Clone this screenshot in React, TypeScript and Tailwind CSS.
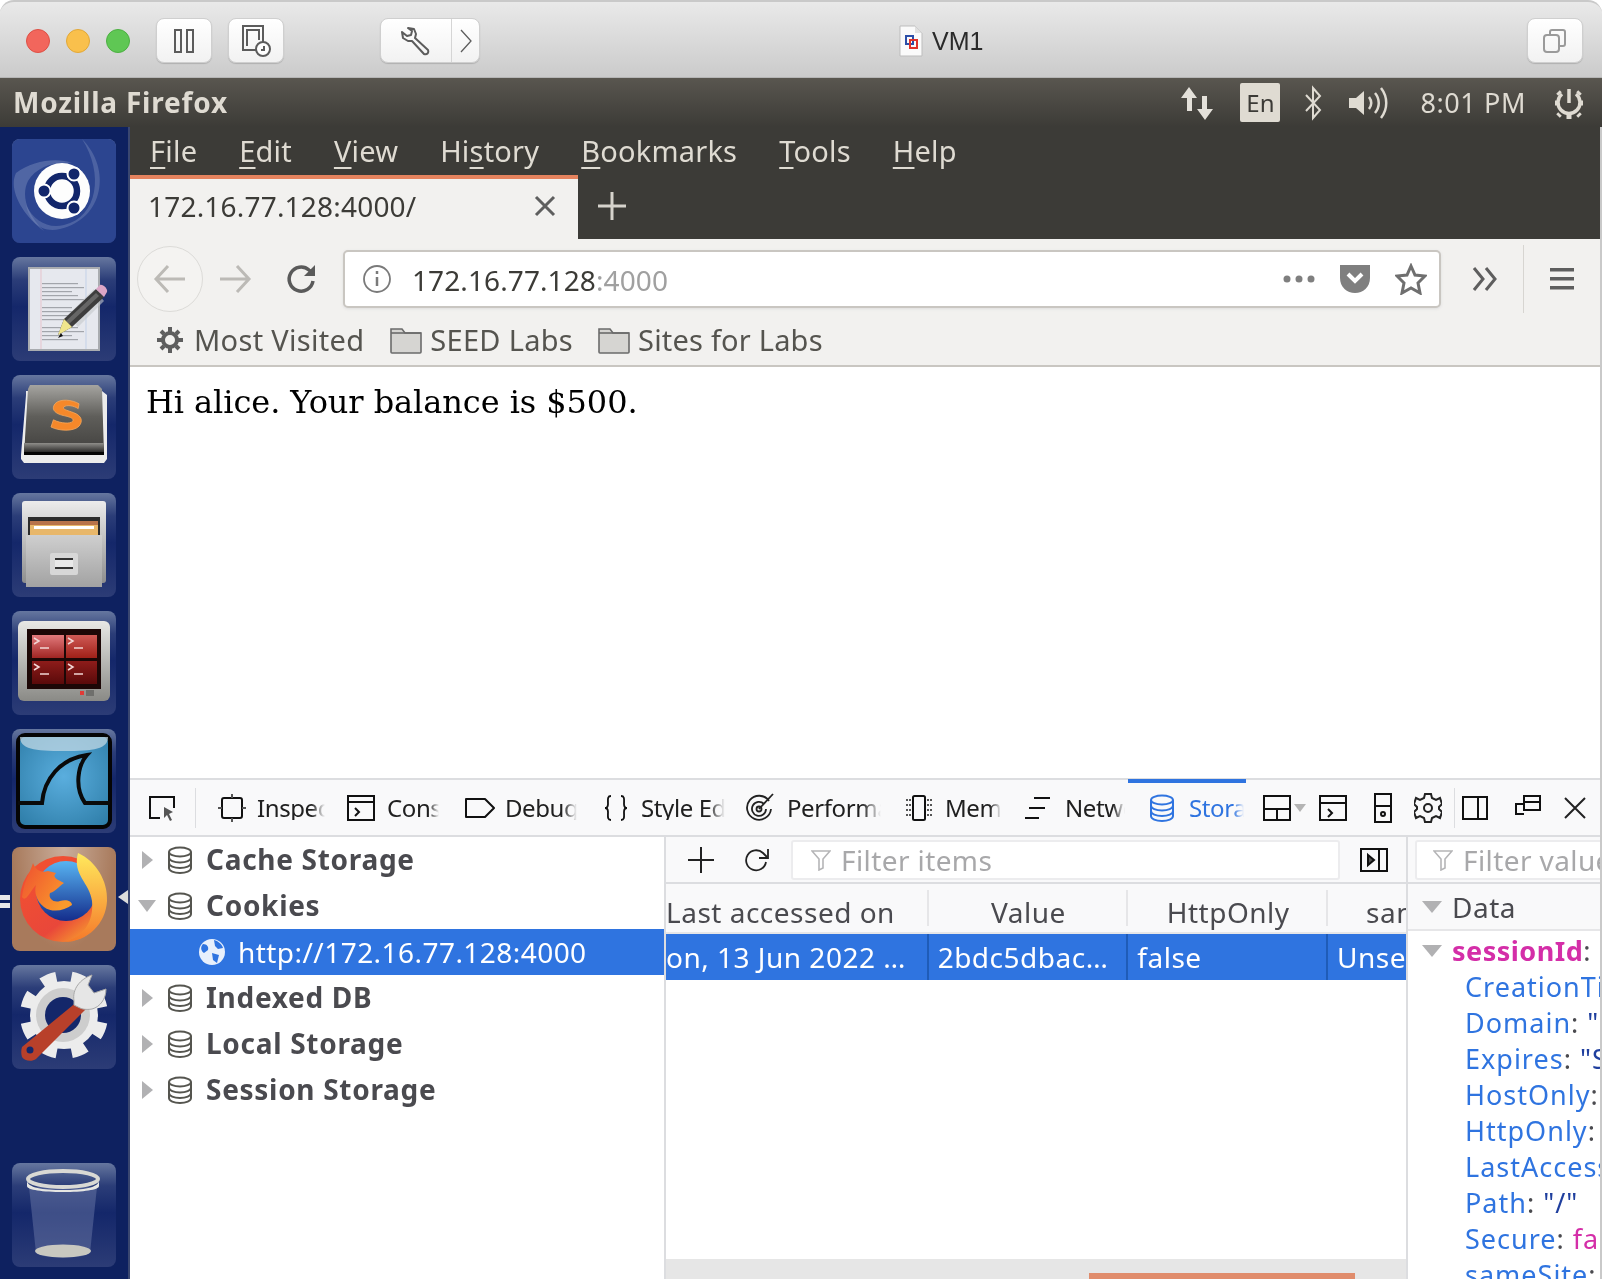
import type { ReactNode } from "react";

const ui = "font-['Noto_Sans',sans-serif]";

const Tile = ({ children, active }: { children: ReactNode; active?: boolean }) => (
  <div
    className={`w-[104px] h-[104px] rounded-[8px] overflow-hidden shrink-0 ${
      active
        ? "bg-[radial-gradient(ellipse_at_50%_0%,#c9ad9b,#a87a5c_70%)]"
        : "bg-[linear-gradient(180deg,#66779f_0%,#2b3d78_22%,#14276a_48%,#2c3c76_100%)]"
    }`}
  >
    <svg viewBox="0 0 104 104" className="w-[104px] h-[104px]">
      {children}
    </svg>
  </div>
);

const UbuntuIcon = () => (
  <>
    <rect width="104" height="104" fill="#2c4590" />
    <path d="M70 0c30 30 22 80-22 90C30 94 18 84 14 66c8 16 22 24 38 20 34-8 40-52 18-86z" fill="#6c7fb4" opacity=".5" />
    <path d="M4 34c16-12 40-16 56-10-18-2-36 4-44 18-6 12-4 30 16 50C10 76-4 50 4 34z" fill="#7c8dbd" opacity=".45" />
    <circle cx="50" cy="52" r="28" fill="#fdfdfd" />
    <circle cx="50" cy="52" r="15" fill="none" stroke="#12266b" strokeWidth="6.5" />
    <circle cx="32" cy="52" r="6.5" fill="#12266b" stroke="#fff" strokeWidth="2" />
    <circle cx="62" cy="35" r="6.5" fill="#12266b" stroke="#fff" strokeWidth="2" />
    <circle cx="62" cy="69" r="6.5" fill="#12266b" stroke="#fff" strokeWidth="2" />
  </>
);

const EditorIcon = () => (
  <>
    <rect x="16" y="10" width="72" height="84" fill="#a9acb0" />
    <rect x="18" y="12" width="68" height="80" fill="#e6e8ee" />
    <path d="M29 12v80" stroke="#e6c3cc" strokeWidth="1" />
    <path d="M74 12v80" stroke="#c3d1e8" strokeWidth="1" />
    {[26, 30, 34, 38, 42, 50, 54, 58, 62, 70, 74, 78, 82].map((y, i) => (
      <rect key={y} x="30" y={y} width={i % 3 === 0 ? 36 : i % 3 === 1 ? 42 : 30} height="1.2" fill="#a2a5ab" />
    ))}
    <path d="M56 58l26-26 10 12-26 26z" fill="#c4c8cc" opacity=".6" />
    <path d="M52 62l32-30 8 8-32 30-14 8z" fill="#3d3d3d" />
    <path d="M54 64l30-28 3 3-30 28z" fill="#666" />
    <path d="M52 62l8 8-14 8z" fill="#efe58c" />
    <path d="M49 76l-3 5 5-2z" fill="#111" />
    <path d="M84 32l4-4c3-1 8 4 7 7l-3 5z" fill="#dca6c7" />
  </>
);

const SublimeIcon = () => (
  <>
    <path d="M14 16h76l5 4v64l-3 4H12l-3-4v-4l5-60z" fill="#ececec" />
    <path d="M18 10h68l4 4 2 66H12l4-66z" fill="url(#subTop)" />
    <rect x="12" y="68" width="80" height="9" fill="url(#subBar)" />
    <rect x="12" y="77" width="80" height="3" fill="#040404" />
    <g transform="translate(51 40) scale(.8) translate(-51 -41)">
      <path d="M71 27c-8-5-24-7-30 0-6 8 2 13 12 15 9 2 12 4 10 7-3 3-14 3-24-2l-3 9c10 5 28 6 35-1 5-6 4-13-7-17-8-3-14-4-12-7 3-3 12-2 18 2z" fill="#f5882a" stroke="#f7a85a" strokeWidth="1" />
    </g>
    <defs>
      <linearGradient id="subTop" x1="0" y1="0" x2="0" y2="1">
        <stop offset="0" stopColor="#a5a4a0" />
        <stop offset=".45" stopColor="#5f5e5a" />
        <stop offset="1" stopColor="#3f3e3c" />
      </linearGradient>
      <linearGradient id="subBar" x1="0" y1="0" x2="0" y2="1">
        <stop offset="0" stopColor="#8f8e8a" />
        <stop offset="1" stopColor="#2c2b2a" />
      </linearGradient>
    </defs>
  </>
);

const FilesIcon = () => (
  <>
    <rect x="10" y="8" width="84" height="82" rx="3" fill="url(#cabTop)" />
    <rect x="16" y="24" width="72" height="26" fill="#2c2c2c" />
    <rect x="18" y="28" width="68" height="20" fill="#e8b76a" />
    <rect x="18" y="28" width="68" height="4" fill="#b8734a" />
    <rect x="22" y="33" width="60" height="3" fill="#fff" />
    <rect x="14" y="42" width="76" height="52" fill="url(#cabFront)" />
    <rect x="38" y="60" width="28" height="22" rx="2" fill="#d7d7d7" />
    <rect x="43" y="65" width="18" height="11" fill="#333" />
    <rect x="43" y="67" width="18" height="7" fill="#e9e9e9" />
    <defs>
      <linearGradient id="cabTop" x1="0" y1="0" x2="0" y2="1">
        <stop offset="0" stopColor="#ececec" />
        <stop offset="1" stopColor="#8e8e8e" />
      </linearGradient>
      <linearGradient id="cabFront" x1="0" y1="0" x2="0" y2="1">
        <stop offset="0" stopColor="#cfcfcf" />
        <stop offset="1" stopColor="#a2a2a2" />
      </linearGradient>
    </defs>
  </>
);

const WorkspaceIcon = () => (
  <>
    <rect x="6" y="10" width="92" height="80" rx="6" fill="url(#wsFrame)" />
    <rect x="15" y="18" width="74" height="60" fill="#1c0706" />
    <rect x="20" y="24" width="32" height="23" fill="url(#wsA)" />
    <rect x="54" y="24" width="31" height="23" fill="url(#wsB)" />
    <rect x="20" y="50" width="32" height="23" fill="url(#wsC)" />
    <rect x="54" y="50" width="31" height="23" fill="url(#wsC)" />
    {[[22, 30], [56, 30], [22, 56], [56, 56]].map(([x, y]) => (
      <g key={`${x}-${y}`} stroke="#f2d7d5" strokeWidth="1.5" fill="none">
        <path d={`M${x} ${y - 3}l5 3-5 3`} />
        <path d={`M${x + 6} ${y + 7}h9`} />
      </g>
    ))}
    <rect x="68" y="80" width="4" height="4" fill="#e03a36" />
    <rect x="74" y="79" width="8" height="6" fill="#6f6f6c" />
    <defs>
      <linearGradient id="wsFrame" x1="0" y1="0" x2="0" y2="1">
        <stop offset="0" stopColor="#e8e8e5" />
        <stop offset="1" stopColor="#8a8a86" />
      </linearGradient>
      <linearGradient id="wsA" x1="0" y1="0" x2="0" y2="1">
        <stop offset="0" stopColor="#e27a7c" />
        <stop offset="1" stopColor="#a02523" />
      </linearGradient>
      <linearGradient id="wsB" x1="0" y1="0" x2="0" y2="1">
        <stop offset="0" stopColor="#cf5a55" />
        <stop offset="1" stopColor="#a02018" />
      </linearGradient>
      <linearGradient id="wsC" x1="0" y1="0" x2="0" y2="1">
        <stop offset="0" stopColor="#8e1c1a" />
        <stop offset="1" stopColor="#5a0a0a" />
      </linearGradient>
    </defs>
  </>
);

const WiresharkIcon = () => (
  <>
    <rect x="6" y="6" width="92" height="92" rx="7" fill="url(#wsBlue)" stroke="#050505" strokeWidth="4" />
    <path d="M8 8h88c0 12-14 14-44 14S8 20 8 8z" fill="#c2d8e4" opacity=".75" />
    <path d="M6 74h24C32 50 48 30 75 26c-9 10-13 32-2 48h25" fill="none" stroke="#0a0a0a" strokeWidth="4" />
    <defs>
      <radialGradient id="wsBlue" cx=".5" cy=".45" r=".7">
        <stop offset="0" stopColor="#5aaede" />
        <stop offset="1" stopColor="#2e7da8" />
      </radialGradient>
    </defs>
  </>
);

const FirefoxIcon = () => (
  <>
    <circle cx="51" cy="52" r="43" fill="url(#ffOuter)" />
    <circle cx="54" cy="44" r="30" fill="url(#ffBlue)" />
    <path d="M66 6c18 8 30 28 29 48-1 22-19 41-43 41 20-5 30-21 28-41C78 36 60 28 66 6z" fill="url(#ffYellow)" />
    <path d="M10 50c2-16 8-24 11-34 3 8 9 10 15 8l8 2c-4 4 0 6 8 10-6 4-8 8-14 10-2 6 4 10 10 8s12 0 12 4c-8 6-20 8-28 2-8-6-10-16-8-22-6 6-10 18-14 12z" fill="url(#ffHead)" />
    <defs>
      <linearGradient id="ffOuter" x1="0" y1="0" x2=".8" y2="1">
        <stop offset="0" stopColor="#f3532f" />
        <stop offset=".7" stopColor="#e9473a" />
        <stop offset="1" stopColor="#f9a82c" />
      </linearGradient>
      <linearGradient id="ffBlue" x1="0" y1="0" x2="0" y2="1">
        <stop offset="0" stopColor="#58b4f2" />
        <stop offset="1" stopColor="#142d8c" />
      </linearGradient>
      <linearGradient id="ffYellow" x1="0" y1="0" x2="0" y2="1">
        <stop offset="0" stopColor="#ffe95c" />
        <stop offset="1" stopColor="#f5792a" />
      </linearGradient>
      <linearGradient id="ffHead" x1="0" y1="0" x2="1" y2=".6">
        <stop offset="0" stopColor="#ee4e30" />
        <stop offset="1" stopColor="#fa9a2c" />
      </linearGradient>
    </defs>
  </>
);

const SettingsIcon = () => (
  <>
    <circle cx="52" cy="50" r="34" fill="#ececec" />
    <circle cx="52" cy="50" r="38" fill="none" stroke="#ececec" strokeWidth="12" strokeDasharray="14.9 14.9" transform="rotate(11 52 50)" />
    <circle cx="51" cy="50" r="27" fill="#cdcdcd" />
    <circle cx="51" cy="50" r="18" fill="#14276a" />
    <path d="M10 82l56-46 8 8-50 50c-4 3-12 2-14-2-1-3-1-7 0-10z" fill="#b8402a" />
    <circle cx="18" cy="85" r="3.5" fill="#14276a" />
    <path d="M62 36c-2-12 6-22 18-26l-4 10 6 8 12-4c0 10-6 18-14 20-6 1-10 0-12-1l-6-3z" fill="#e6e6e6" stroke="#a8a8a8" />
  </>
);

const TrashIcon = () => (
  <>
    <path d="M17 24h68l-7 66c-6 6-48 6-54 0z" fill="#7d89b4" opacity=".4" />
    <ellipse cx="51" cy="88" rx="28" ry="6.5" fill="#c8c8c0" />
    <ellipse cx="51" cy="16" rx="35" ry="8" fill="none" stroke="#d9d9d4" strokeWidth="4" />
    <path d="M15 17c0 8 16 10 36 10s36-2 36-10v6c0 4-16 6-36 6s-36-2-36-6z" fill="#e6e6e2" />
  </>
);

const launcher = [
  { key: "ubuntu", icon: <UbuntuIcon /> },
  { key: "editor", icon: <EditorIcon /> },
  { key: "sublime", icon: <SublimeIcon /> },
  { key: "files", icon: <FilesIcon /> },
  { key: "workspace", icon: <WorkspaceIcon /> },
  { key: "wireshark", icon: <WiresharkIcon /> },
  { key: "firefox", icon: <FirefoxIcon />, active: true },
  { key: "settings", icon: <SettingsIcon /> },
];

const Launcher = () => (
  <div className="relative w-[130px] shrink-0 bg-[#0e2160] border-r-2 border-[#3a4770] pl-[12px] pt-[12px] pb-[12px] flex flex-col gap-[14px]">
    {launcher.map((item) => (
      <Tile key={item.key} active={item.active}>
        {item.icon}
      </Tile>
    ))}
    <div className="mt-auto">
      <Tile>
        <TrashIcon />
      </Tile>
    </div>
    <div className="absolute left-0 top-[768px] w-[10px] flex flex-col gap-[3px]">
      <div className="h-[5px] bg-[#e8e8e8]" />
      <div className="h-[5px] bg-[#e8e8e8]" />
    </div>
    <div className="absolute left-[118px] top-[763px] w-0 h-0 border-y-[7px] border-y-transparent border-r-[10px] border-r-[#dcdcdc]" />
  </div>
);

const WinButton = ({ children, width = "w-[56px]" }: { children: ReactNode; width?: string }) => (
  <div className={`${width} h-[45px] rounded-[8px] bg-[linear-gradient(180deg,#ffffff,#f2f2f2)] border border-[#cfcfcf] shadow-[0_1px_1px_#b0b0b0] flex items-center justify-center`}>
    {children}
  </div>
);

const TitleBar = () => (
  <div className="relative h-[78px] shrink-0 rounded-t-[14px] border-t-2 border-[#c9c9c9] bg-[linear-gradient(180deg,#e9e9e9,#cbcbcb)] border-b border-b-[#b5b5b5] flex items-center pt-[2px] pl-[26px] pr-[19px]">
    <div className="w-[24px] h-[24px] rounded-full bg-[#f2665c] border border-[#de5045]" />
    <div className="w-[24px] h-[24px] rounded-full bg-[#f9c04c] border border-[#e2a838] ml-[16px]" />
    <div className="w-[24px] h-[24px] rounded-full bg-[#5fc754] border border-[#4cb042] ml-[16px]" />
    <div className="ml-[26px]">
      <WinButton>
        <svg width="24" height="28" viewBox="0 0 24 28" fill="none" stroke="#5c5c5c" strokeWidth="2">
          <rect x="3" y="3" width="6" height="22" />
          <rect x="15" y="3" width="6" height="22" />
        </svg>
      </WinButton>
    </div>
    <div className="ml-[16px]">
      <WinButton>
        <svg width="32" height="34" viewBox="0 0 32 34" fill="none" stroke="#5c5c5c" strokeWidth="2">
          <path d="M16 26H3V2h20v16" />
          <path d="M7 22V6h12v10" />
          <circle cx="23" cy="25" r="7" fill="#fff" />
          <path d="M24 22v4h-3" />
        </svg>
      </WinButton>
    </div>
    <div className="ml-[96px] w-[100px] h-[45px] rounded-[8px] bg-[linear-gradient(180deg,#ffffff,#f2f2f2)] border border-[#cfcfcf] shadow-[0_1px_1px_#b0b0b0] flex">
      <div className="w-[71px] flex items-center justify-center border-r border-[#d5d5d5]">
        <svg width="30" height="30" viewBox="0 0 30 30" fill="none" stroke="#5c5c5c" strokeWidth="2" strokeLinejoin="round">
          <path d="M7 2l6 1 2 5-1 4 13 12c1 3-1 5-4 4L11 15l-4 0-5-3-1-6 5 4 4-1 1-4z" />
        </svg>
      </div>
      <div className="flex-1 flex items-center justify-center">
        <svg width="14" height="26" viewBox="0 0 14 26" fill="none" stroke="#5c5c5c" strokeWidth="1.3">
          <path d="M2 2l10 11L2 24" />
        </svg>
      </div>
    </div>
    <div className="ml-[419px] flex items-center">
      <svg width="24" height="32" viewBox="0 0 24 32">
        <path d="M1 1h15l7 7v23H1z" fill="#fafafa" stroke="#bdbdbd" />
        <path d="M16 1v7h7" fill="#e0e0e0" />
        <rect x="7" y="11" width="7" height="8" fill="none" stroke="#2b4ea8" strokeWidth="2" />
        <rect x="11" y="15" width="7" height="8" fill="none" stroke="#e0322b" strokeWidth="2" />
      </svg>
      <span className="ml-[9px] mt-[2px] text-[25px] text-[#2a2a2a] font-['Liberation_Sans',sans-serif] leading-none">VM1</span>
    </div>
    <div className="ml-auto">
      <WinButton>
        <svg width="26" height="26" viewBox="0 0 26 26" fill="none" stroke="#9a9a9a" strokeWidth="2">
          <rect x="2" y="7" width="15" height="17" rx="3" />
          <path d="M8 6V4a2 2 0 0 1 2-2h11a2 2 0 0 1 2 2v12a2 2 0 0 1-2 2h-3" />
        </svg>
      </WinButton>
    </div>
  </div>
);

const TopPanel = () => (
  <div className={`h-[49px] shrink-0 bg-[linear-gradient(180deg,#59564f,#3c3b37)] flex items-center pl-[13px] text-[#dfdbd2] ${ui}`}>
    <span className="text-[28px] font-bold leading-none tracking-[0.8px] -mt-[2px]">Mozilla Firefox</span>
    <div className="ml-auto flex items-center pr-[16px]">
      <svg width="36" height="36" viewBox="0 0 36 36" fill="#e4e1da">
        <path d="M10 2l8 11h-5v13H8V13H2z" />
        <path d="M26 35l-8-11h5V11h5v13h6z" />
      </svg>
      <div className="ml-[25px] w-[40px] h-[39px] rounded-[2px] bg-[#dfdbd2] text-[#3c3b37] text-[24px] flex items-center justify-center leading-none">En</div>
      <svg className="ml-[23px]" width="20" height="36" viewBox="0 0 20 36" fill="none" stroke="#dfdbd2" strokeWidth="2">
        <path d="M3 10l14 15-7 8V3l7 8L3 26" />
      </svg>
      <svg className="ml-[24px]" width="42" height="36" viewBox="0 0 42 36" fill="none" stroke="#dfdbd2" strokeWidth="2.5">
        <path d="M2 13h7l8-7v24l-8-7H2z" fill="#dfdbd2" stroke="none" />
        <path d="M22 12c3 4 3 8 0 12M28 8c5 6 5 14 0 20M34 3c7 9 7 21 0 30" />
      </svg>
      <span className="ml-[31px] text-[27px] leading-none text-[#dfdbd2] tracking-[0.6px]">8:01 PM</span>
      <svg className="ml-[26px]" width="34" height="36" viewBox="0 0 34 36" fill="none" stroke="#dfdbd2" strokeWidth="3.5">
        <path d="M17 4v14" />
        <path d="M10 9a11 11 0 1 0 14 0" />
        <path d="M3 18h3M28 18h3M6 7l2 2M26 29l2 2M28 7l-2 2M8 29l-2 2M17 30v4" strokeWidth="5" />
      </svg>
    </div>
  </div>
);

const menuItems: [string, string, string][] = [
  ["", "F", "ile"],
  ["", "E", "dit"],
  ["", "V", "iew"],
  ["Hi", "s", "tory"],
  ["", "B", "ookmarks"],
  ["", "T", "ools"],
  ["", "H", "elp"],
];

const MenuBar = () => (
  <div className={`h-[48px] shrink-0 bg-[#3c3b37] flex items-center pl-[20px] pb-[2px] gap-[42px] text-[29px] text-[#dfdbd2] ${ui}`}>
    {menuItems.map(([before, key, after]) => (
      <span key={key} className="leading-none tracking-[0.2px]">
        {before}
        <span className="underline decoration-[2px] underline-offset-[5px]">{key}</span>
        {after}
      </span>
    ))}
  </div>
);

const TabRow = () => (
  <div className={`h-[64px] shrink-0 bg-[#3c3b37] flex ${ui}`}>
    <div className="w-[448px] bg-[#f2f1ef] border-t-[4px] border-[#e5835e] flex items-center pl-[18px] pr-[22px] pb-[6px]">
      <span className="text-[28px] text-[#3c3b37] leading-none tracking-[0.2px]">172.16.77.128:4000/</span>
      <svg className="ml-auto" width="22" height="22" viewBox="0 0 22 22" stroke="#5e5e5e" strokeWidth="3">
        <path d="M2 2l18 18M20 2L2 20" />
      </svg>
    </div>
    <div className="ml-[20px] pb-[2px] flex items-center">
      <svg width="28" height="28" viewBox="0 0 28 28" stroke="#d6d3cc" strokeWidth="3">
        <path d="M14 0v28M0 14h28" />
      </svg>
    </div>
  </div>
);

const NavRow = () => (
  <div className={`h-[81px] shrink-0 bg-[#f2f1ef] flex items-start ${ui}`}>
    <div className="ml-[7px] mt-[7px] w-[66px] h-[66px] rounded-full border border-[#dcdbd8] bg-[#f4f3f1] flex items-center justify-center">
      <svg width="34" height="30" viewBox="0 0 34 30" fill="none" stroke="#bcbab6" strokeWidth="3">
        <path d="M32 15H3M15 2L3 15l12 13" />
      </svg>
    </div>
    <svg className="ml-[15px] mt-[25px]" width="34" height="30" viewBox="0 0 34 30" fill="none" stroke="#bcbab6" strokeWidth="3">
      <path d="M2 15h29M19 2l12 13-12 13" />
    </svg>
    <svg className="ml-[34px] mt-[24px]" width="32" height="32" viewBox="0 0 32 32" fill="none" stroke="#5a5a5a" strokeWidth="3.5">
      <path d="M27 18a12 12 0 1 1-4-11l5 4" />
      <path d="M29 2v11H18" fill="#5a5a5a" stroke="none" />
    </svg>
    <div className="ml-[25px] mt-[11px] w-[1098px] h-[58px] rounded-[5px] bg-white border-2 border-[#c9c6c1] shadow-[0_1px_3px_#dddddd] flex items-center pl-[17px] pr-[12px]">
      <svg width="30" height="30" viewBox="0 0 30 30" fill="none" stroke="#7a7a7a" strokeWidth="1.8">
        <circle cx="15" cy="15" r="13" />
        <path d="M15 13v9" strokeWidth="2.5" />
        <path d="M15 7v3" strokeWidth="2.5" />
      </svg>
      <span className="ml-[20px] mt-[2px] text-[28px] leading-none text-[#3c3b37] tracking-[0.1px]">
        172.16.77.128<span className="text-[#a0a0a0]">:4000</span>
      </span>
      <div className="ml-auto flex items-center">
        <svg width="32" height="10" viewBox="0 0 32 10" fill="#7f7f7f">
          <circle cx="4" cy="5" r="3.5" />
          <circle cx="16" cy="5" r="3.5" />
          <circle cx="28" cy="5" r="3.5" />
        </svg>
        <svg className="ml-[24px]" width="32" height="30" viewBox="0 0 32 30">
          <path d="M1 1h30v13c0 9-7 15-15 15S1 23 1 14z" fill="#7f7f7f" />
          <path d="M9 10l7 7 7-7" fill="none" stroke="#fff" strokeWidth="4" />
        </svg>
        <svg className="ml-[24px]" width="32" height="32" viewBox="0 0 32 32" fill="none" stroke="#6f6f6f" strokeWidth="3">
          <path d="M16 3l4 9 10 1-7 7 2 10-9-5-9 5 2-10-7-7 10-1z" />
        </svg>
      </div>
    </div>
    <svg className="ml-[31px] mt-[28px]" width="26" height="24" viewBox="0 0 26 24" fill="none" stroke="#5e5e5e" strokeWidth="3">
      <path d="M2 1l9 11-9 11M14 1l9 11-9 11" />
    </svg>
    <div className="ml-[25px] mt-[6px] w-[1px] h-[68px] bg-[#d7d5d1]" />
    <svg className="ml-[26px] mt-[29px]" width="24" height="22" viewBox="0 0 24 22" fill="#5e5e5e">
      <rect width="24" height="3.5" />
      <rect y="9" width="24" height="3.5" />
      <rect y="18" width="24" height="3.5" />
    </svg>
  </div>
);

const Folder = () => (
  <svg width="32" height="28" viewBox="0 0 32 28" stroke="#6b6b6b" strokeWidth="1.6" fill="#d6d5d2">
    <path d="M1 3h11l3 4h16v19a1 1 0 0 1-1 1H2a1 1 0 0 1-1-1z" />
    <path d="M1 7h30" fill="none" />
  </svg>
);

const Bookmarks = () => (
  <div className={`h-[47px] shrink-0 bg-[#f2f1ef] border-b-2 border-[#c9c6c1] flex items-center pb-[6px] text-[29px] text-[#55544f] ${ui}`}>
    <svg className="ml-[26px]" width="28" height="28" viewBox="0 0 28 28" fill="none" stroke="#5e5e5e" strokeWidth="4">
      <circle cx="14" cy="14" r="7" />
      <path d="M14 1v5M14 22v5M1 14h5M22 14h5M5 5l3 3M20 20l3 3M23 5l-3 3M8 20l-3 3" />
    </svg>
    <span className="ml-[10px] leading-none tracking-[0.3px]">Most Visited</span>
    <div className="ml-[26px]"><Folder /></div>
    <span className="ml-[8px] leading-none tracking-[0.3px]">SEED Labs</span>
    <div className="ml-[25px]"><Folder /></div>
    <span className="ml-[8px] leading-none tracking-[0.2px]">Sites for Labs</span>
  </div>
);

const DbIcon = ({ color = "#55554f" }: { color?: string }) => (
  <svg width="26" height="28" viewBox="0 0 26 28" fill="none" stroke={color} strokeWidth="2">
    <ellipse cx="13" cy="6" rx="11" ry="4.5" />
    <path d="M2 6v16c0 3 5 5 11 5s11-2 11-5V6" />
    <path d="M2 11.5c0 3 5 5 11 5s11-2 11-5M2 17c0 3 5 5 11 5s11-2 11-5" />
  </svg>
);

const devTabs: { label: string; iconW: string; textW: string; icon: ReactNode; active?: boolean }[] = [
  {
    label: "Inspector",
    iconW: "ml-[21px] w-[30px]",
    textW: "ml-[10px] w-[68px]",
    icon: (
      <svg width="30" height="30" viewBox="0 0 30 30" fill="none" stroke="#111" strokeWidth="2">
        <rect x="5" y="5" width="20" height="20" rx="2" />
        <path d="M15 1v4M15 25v4M1 15h4M25 15h4" stroke="#555" />
      </svg>
    ),
  },
  {
    label: "Console",
    iconW: "ml-[22px] w-[28px]",
    textW: "ml-[12px] w-[52px]",
    icon: (
      <svg width="28" height="28" viewBox="0 0 28 28" fill="none" stroke="#111" strokeWidth="2">
        <rect x="1" y="2" width="26" height="24" />
        <path d="M1 8h26M8 14l4 4-4 4" />
      </svg>
    ),
  },
  {
    label: "Debugger",
    iconW: "ml-[26px] w-[30px]",
    textW: "ml-[10px] w-[72px]",
    icon: (
      <svg width="30" height="24" viewBox="0 0 30 24" fill="none" stroke="#111" strokeWidth="2">
        <path d="M1 3h19l9 9-9 9H1z" strokeLinejoin="round" />
      </svg>
    ),
  },
  {
    label: "Style Editor",
    iconW: "ml-[26px] w-[26px]",
    textW: "ml-[12px] w-[84px]",
    icon: (
      <svg width="26" height="28" viewBox="0 0 26 28" fill="none" stroke="#111" strokeWidth="1.8">
        <path d="M8 2c-4 0-3 4-3 8 0 3-1 4-3 4 2 0 3 1 3 4 0 4-1 8 3 8M18 2c4 0 3 4 3 8 0 3 1 4 3 4-2 0-3 1-3 4 0 4 1 8-3 8" />
      </svg>
    ),
  },
  {
    label: "Performance",
    iconW: "ml-[20px] w-[30px]",
    textW: "ml-[12px] w-[94px]",
    icon: (
      <svg width="30" height="32" viewBox="0 0 30 32" fill="none" stroke="#222" strokeWidth="1.8">
        <path d="M24 9a12 12 0 1 0 2 8" />
        <path d="M19 12a7 7 0 1 0 2 5" />
        <circle cx="14" cy="17" r="2.5" />
        <path d="M14 17L28 2" />
      </svg>
    ),
  },
  {
    label: "Memory",
    iconW: "ml-[23px] w-[30px]",
    textW: "ml-[11px] w-[56px]",
    icon: (
      <svg width="30" height="28" viewBox="0 0 30 28" fill="none" stroke="#111" strokeWidth="2">
        <rect x="9" y="2" width="12" height="24" rx="1.5" />
        <path d="M2 6h5M2 11h5M2 16h5M2 21h5M23 6h5M23 11h5M23 16h5M23 21h5" stroke="#555" strokeDasharray="2 1" />
      </svg>
    ),
  },
  {
    label: "Network",
    iconW: "ml-[23px] w-[27px]",
    textW: "ml-[14px] w-[60px]",
    icon: (
      <svg width="27" height="26" viewBox="0 0 27 26" fill="none" stroke="#111" strokeWidth="2">
        <path d="M10 3h16M5 13h16M1 23h14" />
      </svg>
    ),
  },
  {
    label: "Storage",
    iconW: "ml-[24px] w-[26px]",
    textW: "ml-[14px] w-[55px]",
    icon: <DbIcon color="#2f74e0" />,
    active: true,
  },
];

const DevToolbar = () => (
  <div className={`relative h-[59px] shrink-0 bg-[#f9f9fa] border-y-2 border-[#dcdde0] flex items-center ${ui}`}>
    <svg className="ml-[18px]" width="30" height="30" viewBox="0 0 30 30" fill="none" stroke="#111" strokeWidth="2">
      <path d="M12 25H2V4h24v11" />
      <path d="M16 14l9 5-4 2 3 6-2 1-3-6-3 3z" fill="#555" stroke="none" />
    </svg>
    <div className="ml-[17px] w-[1px] h-[40px] bg-[#dcdde0]" />
    {devTabs.map((tab) => (
      <div key={tab.label} className="flex items-center">
        <div className={`${tab.iconW} flex justify-center`}>{tab.icon}</div>
        <span
          className={`${tab.textW} overflow-hidden whitespace-nowrap text-[24px] leading-none tracking-[-0.4px] [mask-image:linear-gradient(to_right,black_80%,transparent)] ${
            tab.active ? "text-[#2f74e0]" : "text-[#202020]"
          }`}
        >
          {tab.label}
        </span>
      </div>
    ))}
    <div className="absolute left-[998px] -top-[1px] w-[118px] h-[4px] bg-[#2f74e0]" />
    <div className="ml-[19px] flex items-center">
      <svg width="28" height="28" viewBox="0 0 28 28" fill="none" stroke="#111" strokeWidth="2">
        <rect x="1" y="2" width="26" height="24" />
        <path d="M1 15h26M14 15v11" />
      </svg>
      <div className="ml-[3px] w-0 h-0 border-x-[6px] border-x-transparent border-t-[8px] border-t-[#b4b4b4]" />
    </div>
    <svg className="ml-[13px]" width="28" height="28" viewBox="0 0 28 28" fill="none" stroke="#111" strokeWidth="2">
      <rect x="1" y="2" width="26" height="24" />
      <path d="M1 9h26M9 15l4 4-4 4" />
    </svg>
    <svg className="ml-[27px]" width="18" height="30" viewBox="0 0 18 30" fill="none" stroke="#111" strokeWidth="2">
      <rect x="1" y="1" width="16" height="28" />
      <path d="M1 13h16" />
      <circle cx="9" cy="21" r="2" />
    </svg>
    <svg className="ml-[22px]" width="28" height="30" viewBox="0 0 28 30" fill="none" stroke="#222" strokeWidth="2">
      <circle cx="14" cy="15" r="4" />
      <path d="M11 1h6l1 4 4 2 4-2 2 6-3 3v2l3 3-2 6-4-2-4 2-1 4h-6l-1-4-4-2-4 2-2-6 3-3v-2L0 11l2-6 4 2 4-2z" />
    </svg>
    <div className="ml-[12px] w-[1px] h-[40px] bg-[#dcdde0]" />
    <svg className="ml-[7px]" width="26" height="26" viewBox="0 0 26 26" fill="none" stroke="#111" strokeWidth="2">
      <rect x="1" y="2" width="24" height="22" />
      <path d="M16 2v22" />
    </svg>
    <svg className="ml-[27px]" width="26" height="26" viewBox="0 0 26 26" fill="none" stroke="#111" strokeWidth="2">
      <rect x="9" y="1" width="16" height="14" />
      <path d="M9 7h16M9 19H1V9h8" />
    </svg>
    <svg className="ml-[22px]" width="24" height="24" viewBox="0 0 24 24" fill="none" stroke="#222" strokeWidth="2">
      <path d="M2 2l20 20M22 2L2 22" />
    </svg>
  </div>
);

const treeItems = [
  { label: "Cache Storage" },
  { label: "Cookies", open: true },
  { label: "Indexed DB" },
  { label: "Local Storage" },
  { label: "Session Storage" },
];

const TreeRow = ({ label, open }: { label: string; open?: boolean }) => (
  <div className="h-[46px] flex items-center">
    {open ? (
      <div className="ml-[8px] w-0 h-0 border-x-[9px] border-x-transparent border-t-[12px] border-t-[#b1b1b3]" />
    ) : (
      <div className="ml-[12px] w-0 h-0 border-y-[9px] border-y-transparent border-l-[11px] border-l-[#b1b1b3]" />
    )}
    <div className={open ? "ml-[11px]" : "ml-[14px]"}>
      <DbIcon />
    </div>
    <span className="ml-[13px] -mt-[2px] text-[28px] font-bold text-[#4a4a4f] leading-none tracking-[0.7px]">{label}</span>
  </div>
);

const Tree = () => (
  <div className="w-[534px] shrink-0">
    {treeItems.slice(0, 2).map((item) => (
      <TreeRow key={item.label} {...item} />
    ))}
    <div className="h-[46px] bg-[#2f74e0] flex items-center pl-[68px]">
      <svg width="28" height="28" viewBox="0 0 28 28">
        <circle cx="14" cy="14" r="13" fill="#e8f0fc" />
        <path d="M5 6c4 0 6 3 5 6l-4 3c-3-2-4-6-1-9zM16 2c4 1 8 4 9 8l-5 1-3-3zM14 15l7 2-2 8-4-3z" fill="#2f74e0" />
      </svg>
      <span className="ml-[12px] text-[28px] text-white leading-none tracking-[0.45px]">http://172.16.77.128:4000</span>
    </div>
    {treeItems.slice(2).map((item) => (
      <TreeRow key={item.label} {...item} />
    ))}
  </div>
);

const FilterBox = ({ text, className }: { text: string; className: string }) => (
  <div className={`h-[40px] rounded-[3px] border-2 border-[#ececee] bg-white flex items-center pl-[16px] overflow-hidden ${className}`}>
    <svg width="20" height="22" viewBox="0 0 20 22" fill="none" stroke="#b5b5b7" strokeWidth="1.6" className="shrink-0">
      <path d="M1 2h18l-7 8v9l-4 2V10z" />
    </svg>
    <span className="ml-[10px] text-[28px] text-[#a8a8aa] leading-none whitespace-nowrap tracking-[0.4px]">{text}</span>
  </div>
);

const columns = [
  { head: "Last accessed on", cell: "on, 13 Jun 2022 …", w: "w-[263px]", headClass: "justify-start" },
  { head: "Value", cell: "2bdc5dbac…", w: "w-[200px]", headClass: "justify-center" },
  { head: "HttpOnly", cell: "false", w: "w-[200px]", headClass: "justify-center" },
  { head: "sameSite", cell: "Unset", w: "w-[78px]", headClass: "justify-start pl-[38px]" },
];

const CookieTable = () => (
  <div className="w-[742px] shrink-0 border-l-2 border-[#dcdde0] flex flex-col">
    <div className="h-[47px] shrink-0 bg-[#f9f9fa] border-b-2 border-[#dcdde0] flex items-center">
      <svg className="ml-[22px]" width="26" height="26" viewBox="0 0 26 26" stroke="#222" strokeWidth="2">
        <path d="M13 0v26M0 13h26" />
      </svg>
      <svg className="ml-[30px]" width="26" height="26" viewBox="0 0 26 26" fill="none" stroke="#222" strokeWidth="1.8">
        <path d="M22 15a10 10 0 1 1-3-9l4 4" />
        <path d="M24 2v9h-9" />
      </svg>
      <FilterBox text="Filter items" className="ml-[21px] w-[549px] pl-[18px]" />
      <svg className="ml-[20px]" width="28" height="24" viewBox="0 0 28 24" fill="none" stroke="#111" strokeWidth="2">
        <rect x="1" y="1" width="26" height="22" />
        <path d="M19 1v22" />
        <path d="M8 7l6 5-6 5z" fill="#555" />
      </svg>
    </div>
    <div className="h-[50px] shrink-0 bg-[#f9f9fa] border-b-2 border-[#e6e6e8] flex">
      {columns.map((col, i) => (
        <div
          key={col.head}
          className={`${col.w} flex items-center overflow-hidden whitespace-nowrap pt-[8px] text-[28px] text-[#4a4a4f] leading-none tracking-[0.5px] ${col.headClass} ${
            i < 3 ? "relative" : ""
          }`}
        >
          <span>{col.head}</span>
          {i < 3 && <div className="absolute right-0 top-[6px] bottom-[6px] w-[2px] bg-[#e6e6e8]" />}
        </div>
      ))}
    </div>
    <div className="h-[46px] shrink-0 bg-[#2f74e0] flex">
      {columns.map((col, i) => (
        <div
          key={col.head}
          className={`${col.w} flex items-center overflow-hidden whitespace-nowrap text-[28px] text-white leading-none tracking-[0.5px] ${
            i === 0 ? "" : "pl-[9px]"
          } ${i < 3 ? "border-r-2 border-[#1f5cb8]" : ""}`}
        >
          {col.cell}
        </div>
      ))}
    </div>
    <div className="flex-1" />
    <div className="h-[20px] shrink-0 bg-[#e6e6e6] relative">
      <div className="absolute left-[423px] bottom-0 w-[266px] h-[6px] bg-[#e08c6c]" />
    </div>
  </div>
);

const dataRows: { key: string; value: string; pink?: boolean }[] = [
  { key: "CreationTime", value: ' "Sun, 12 Jun 2022"' },
  { key: "Domain", value: ' "172.16.77.128"' },
  { key: "Expires", value: ' "Session"' },
  { key: "HostOnly", value: " true", pink: true },
  { key: "HttpOnly", value: " false", pink: true },
  { key: "LastAccessed", value: ' "Mon, 13 Jun 2022"' },
  { key: "Path", value: ' "/"' },
  { key: "Secure", value: " false", pink: true },
  { key: "sameSite", value: ' "Unset"' },
];

const DataPanel = () => (
  <div className="flex-1 min-w-0 border-l-2 border-[#dcdde0] overflow-hidden flex flex-col rounded-br-[10px]">
    <div className="h-[47px] shrink-0 bg-[#f9f9fa] border-b-2 border-[#dcdde0] flex items-center pl-[7px]">
      <FilterBox text="Filter values" className="w-[240px] shrink-0" />
    </div>
    <div className="h-[47px] shrink-0 bg-[#f9f9fa] border-b-2 border-[#e6e6e8] flex items-center pl-[14px]">
      <div className="w-0 h-0 border-x-[10px] border-x-transparent border-t-[12px] border-t-[#b1b1b3]" />
      <span className="ml-[10px] text-[28px] text-[#4a4a4f] leading-none tracking-[0.5px]">Data</span>
    </div>
    <div className="pt-[2px] whitespace-nowrap text-[27px] leading-[36px] tracking-[1px]">
      <div className="h-[36px] flex items-center pl-[14px]">
        <div className="w-0 h-0 border-x-[10px] border-x-transparent border-t-[12px] border-t-[#b1b1b3]" />
        <span className="ml-[10px] font-bold text-[#d42ea8] tracking-[0.5px]">sessionId</span>
        <span className="text-[#4a4a4f]">: "2bdc5dbac"</span>
      </div>
      {dataRows.map((row) => (
        <div key={row.key} className="pl-[57px] h-[36px] text-[#2f74e0]">
          {row.key}
          <span className="text-[#4a4a4f]">:</span>
          <span className={row.pink ? "text-[#d42ea8]" : "text-[#1f3f9e]"}>{row.value}</span>
        </div>
      ))}
    </div>
  </div>
);

const App = () => (
  <div className="w-[1602px] h-[1279px] overflow-hidden bg-white flex flex-col blur-[0.4px]">
    <TitleBar />
    <TopPanel />
    <div className="flex-1 min-h-0 flex">
      <Launcher />
      <div className="flex-1 min-w-0 flex flex-col border-r-2 border-[#c9c9c9]">
        <MenuBar />
        <TabRow />
        <NavRow />
        <Bookmarks />
        <div className="h-[411px] shrink-0 bg-white pl-[16px] pt-[15px]">
          <p className="font-['DejaVu_Serif',serif] text-[32px] leading-[40px] text-black tracking-[-0.07px]">Hi alice. Your balance is $500.</p>
        </div>
        <DevToolbar />
        <div className={`flex-1 min-h-0 flex ${ui}`}>
          <Tree />
          <CookieTable />
          <DataPanel />
        </div>
      </div>
    </div>
  </div>
);

export default App;
